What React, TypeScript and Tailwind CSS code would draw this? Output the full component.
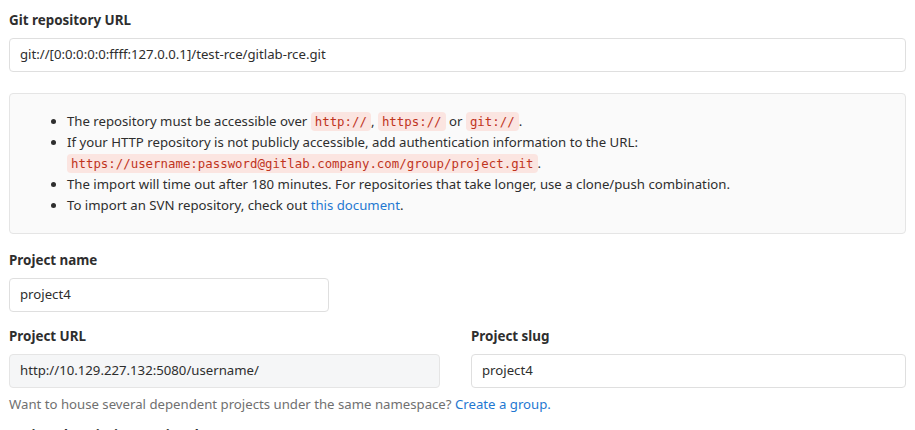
import React from "react";

function Code({ children }: { children: React.ReactNode }) {
  return (
    <code className="rounded-[4px] bg-[#fbe5e1] px-[4px] py-[2px] text-[12.4px] text-[#c0341d] [font-family:'DejaVu_Sans_Mono',monospace]">
      {children}
    </code>
  );
}

function Label({ children }: { children: React.ReactNode }) {
  return <label className="mb-[8px] block text-[13.4px] font-bold leading-[20px] text-[#2e2e2e]">{children}</label>;
}

export default function App() {
  return (
    <div className="h-[430px] overflow-hidden bg-white px-[9px] pt-[10px] text-[13.2px] text-[#2e2e2e] [font-family:'Noto_Sans',sans-serif]">
      <Label>Git repository URL</Label>
      <div className="flex h-[34px] items-center rounded-[4px] border border-[#dfdfdf] px-[10px]">
        git://[0:0:0:0:0:ffff:127.0.0.1]/test-rce/gitlab-rce.git
      </div>

      <div className="mt-[21px] rounded-[4px] border border-[#e5e5e5] bg-[#fafafa] pb-[17px] pl-[39px] pr-4 pt-[17px]">
        <ul className="list-disc pl-[18px] leading-[21px]">
          <li>
            The repository must be accessible over <Code>http://</Code>, <Code>https://</Code> or <Code>git://</Code>.
          </li>
          <li>
            If your HTTP repository is not publicly accessible, add authentication information to the URL:
            <br />
            <Code>https://username:password@gitlab.company.com/group/project.git</Code>.
          </li>
          <li>The import will time out after 180 minutes. For repositories that take longer, use a clone/push combination.</li>
          <li>
            To import an SVN repository, check out <a className="text-[#1f78d1]">this document</a>.
          </li>
        </ul>
      </div>

      <div className="mt-[16px]">
        <Label>Project name</Label>
        <div className="flex h-[34px] w-[320px] items-center rounded-[4px] border border-[#dfdfdf] px-[10px]">project4</div>
      </div>

      <div className="mt-[14px] flex gap-[31px]">
        <div className="w-[431px]">
          <Label>Project URL</Label>
          <div className="flex h-[34px] items-center rounded-[4px] border border-[#e5e5e5] bg-[#f5f6f7] px-[10px]">
            http://10.129.227.132:5080/username/
          </div>
        </div>
        <div className="flex-1">
          <Label>Project slug</Label>
          <div className="flex h-[34px] items-center rounded-[4px] border border-[#dfdfdf] px-[10px]">project4</div>
        </div>
      </div>
      <p className="mt-[6px] leading-[20px] text-[#707070]">
        Want to house several dependent projects under the same namespace? <a className="text-[#1f78d1]">Create a group.</a>
      </p>
      <div className="mt-[11px]">
        <Label>Project description (optional)</Label>
      </div>
    </div>
  );
}
